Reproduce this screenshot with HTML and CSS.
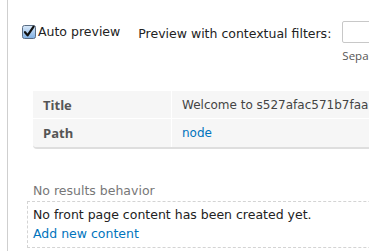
FILE: index.html
```html
<!DOCTYPE html>
<html lang="en">
<head>
    <meta charset="UTF-8">
    <title>Views preview</title>
    <link rel="stylesheet" href="styles.css">
</head>
<body>
    <div class="panel">
        <div class="preview-controls">
            <label class="auto-preview">
                <svg class="check" width="14" height="14" viewBox="0 0 14 14">
                    <defs>
                        <linearGradient id="cb" x1="0" y1="0" x2="0" y2="1">
                            <stop offset="0" stop-color="#dbeaf9"/>
                            <stop offset="1" stop-color="#7fb0e4"/>
                        </linearGradient>
                    </defs>
                    <rect x="0.5" y="0.5" width="13" height="13" rx="2" fill="url(#cb)" stroke="#5a6d84"/>
                    <path d="M3 7.2 L5.6 10.4 L11.6 1.6" fill="none" stroke="#111" stroke-width="2.2" stroke-linecap="round" stroke-linejoin="round"/>
                </svg>
                Auto preview
            </label>
            <span class="filters-label">Preview with contextual filters:</span>
            <div class="filters">
                <input type="text" class="filters-input">
                <div class="filters-help">Separate contextual filter values with a "/".</div>
            </div>
        </div>

        <table class="preview-info">
            <tr>
                <th>Title</th>
                <td>Welcome to s527afac571b7faa.s3.simplytest.me</td>
            </tr>
            <tr>
                <th>Path</th>
                <td><a href="#">node</a></td>
            </tr>
        </table>

        <div class="empty-label">No results behavior</div>
        <div class="empty-box">
            <p>No front page content has been created yet.</p>
            <a href="#">Add new content</a>
        </div>
    </div>
</body>
</html>
```

FILE: styles.css
```css
body {
    margin: 0;
    font-family: "DejaVu Sans", Verdana, sans-serif;
    font-size: 12.5px;
    color: #222;
    background: #fff;
    overflow: hidden;
    width: 369px;
    height: 251px;
}

a {
    color: #0074bd;
    text-decoration: none;
}

.panel {
    margin-left: 7px;
    border-left: 1px solid #cfcfcf;
    height: 251px;
    white-space: nowrap;
}

.preview-controls {
    display: flex;
    align-items: flex-start;
    padding: 21px 0 0 14px;
    height: 91px;
    box-sizing: border-box;
}

.auto-preview {
    display: flex;
    align-items: center;
    gap: 2px;
    margin-top: 3px;
}

.check {
    flex-shrink: 0;
}

.filters-label {
    margin: 5px 0 0 18px;
}

.filters {
    margin-left: 11px;
}

.filters-input {
    display: block;
    width: 200px;
    height: 22px;
    box-sizing: border-box;
    margin: 0;
    border: 1px solid #c8c8c8;
    border-radius: 2px;
}

.filters-help {
    margin-top: 5px;
    font-family: "Open Sans", sans-serif;
    font-size: 11.5px;
    color: #555;
}

.preview-info {
    margin: 0 0 0 25px;
    width: 520px;
    border-collapse: separate;
    border-spacing: 0;
    background: #f6f6f6;
    border-bottom: 2px solid #dedede;
    border-radius: 0 0 0 4px;
}

.preview-info th,
.preview-info td {
    height: 28px;
    padding: 0 10px;
    text-align: left;
    box-sizing: border-box;
}

.preview-info tr:first-child th,
.preview-info tr:first-child td {
    border-bottom: 1px solid #fff;
}

.preview-info th {
    width: 139px;
    border-right: 1px solid #fff;
    font-family: "Open Sans", sans-serif;
    font-weight: bold;
    font-size: 13px;
    color: #555;
}

.preview-info td {
    font-size: 12px;
    color: #444;
}

.empty-label {
    margin: 34px 0 0 25px;
    color: #777;
}

.empty-box {
    margin: 3px 0 0 19px;
    width: 500px;
    height: 47px;
    box-sizing: border-box;
    border: 1px dashed #d4d4d4;
    padding: 5px 0 0 5px;
}

.empty-box p {
    margin: 0 0 4px;
}
```
